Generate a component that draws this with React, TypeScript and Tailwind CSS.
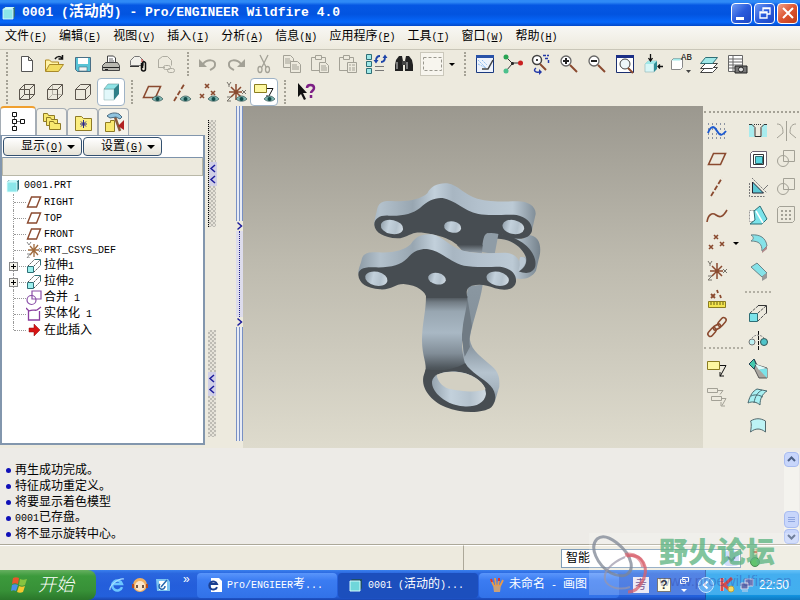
import { Fragment, ReactNode } from "react";

const GRAY = "#a3a196";
const BROWN = "#8a4a2f";
const CYAN = "#9fe8e8";
const TEAL = "#2f6f76";

const icon = {
  newFile: (
    <path d="M6.500 4.500h7l4 4v11h-11zM13.500 4.500v4h4" fill="#fff" stroke="#555" />
  ),
  open: (
    <>
      <path d="M2.500 19v-11h4l2 2h7v3" fill="#fff3a8" stroke="#b08a20" />
      <path d="M2.500 19.500l4-7h14l-5 7z" fill="#f2dc62" stroke="#a98a2a" />
      <path d="M12 7c2-3 5-3 7-1M19.500 3v4h-4" fill="none" stroke="#111" strokeWidth="1.500" />
    </>
  ),
  save: (
    <>
      <path d="M4.500 5.500h15v14h-13l-2-2z" fill="#57c3d6" stroke="#4a6f86" />
      <path d="M7 6h10v6h-10z" fill="#fff" />
      <path d="M8 15h8v4h-8z" fill="#f2f2f2" stroke="#3e6d7c" strokeWidth=".6" />
    </>
  ),
  print: (
    <>
      <path d="M8.500 12v-8h6l2 2v6" fill="#fff" stroke="#444" />
      <path d="M10 7h4M10 9h5" stroke="#666" />
      <path d="M3.500 13.500l3-3h12l2 3v5h-17z" fill="#b9b8b0" stroke="#444" />
      <path d="M4 15.500h16M6 17.500h3" stroke="#222" />
    </>
  ),
  attach: (
    <>
      <path d="M3.500 13.500v-5l4-4h5l4 4v5z" fill="#f1f0ea" stroke="#777" />
      <path d="M3 14.500h9" stroke="#333" />
      <path d="M14.500 11v6a2 2 0 0 0 4 0v-6a2 2 0 0 0-3-1v6" fill="none" stroke="#111" strokeWidth="1.500" />
      <path d="M15 7v3" stroke="#c33" />
    </>
  ),
  link: (
    <g fill="none" stroke="#aeaca1">
      <path d="M3.500 15.500v-8l4-3h5l4 4v5M3 15.500h7" />
      <rect x="8.500" y="13.500" width="7" height="4" rx="2" />
      <rect x="12.500" y="16.500" width="7" height="4" rx="2" />
    </g>
  ),
  undo: (
    <>
      <path d="M3 7v8h8z" fill={GRAY} />
      <path d="M7 12c4-5 13-5 12 1c0 3-3 4-5 5" fill="none" stroke={GRAY} strokeWidth="2" />
    </>
  ),
  redo: (
    <>
      <path d="M21 7v8h-8z" fill={GRAY} />
      <path d="M17 12c-4-5-13-5-12 1c0 3 3 4 5 5" fill="none" stroke={GRAY} strokeWidth="2" />
    </>
  ),
  cut: (
    <g fill="none" stroke={GRAY} strokeWidth="1.300">
      <path d="M8 3l6 12M16 3l-6 12" />
      <ellipse cx="8" cy="17.500" rx="2" ry="3" />
      <ellipse cx="15.500" cy="17.500" rx="2" ry="3" />
    </g>
  ),
  copy: (
    <g fill="#edeade" stroke={GRAY}>
      <path d="M3.500 3.500h7l3 3v9h-10zM5 7h5M5 9h6M5 11h6" />
      <path d="M10.500 9.500h7l3 3v8h-10zM12 13h5M12 15h7M12 17h7" />
    </g>
  ),
  paste: (
    <g fill="#edeade" stroke={GRAY}>
      <path d="M3.500 5.500h14v13h-14z" />
      <path d="M7.500 3.500h6v4h-6z" />
      <path d="M11.500 10.500h6l3 3v7h-9zM13 14h5M13 16h6M13 18h6" />
    </g>
  ),
  pasteSpecial: (
    <g fill="#edeade" stroke={GRAY}>
      <path d="M3.500 5.500h14v13h-14z" />
      <path d="M7.500 3.500h6v4h-6z" />
      <path d="M11.500 10.500h9v10h-9zM13 13h2M16 13h3M13 16h2M16 16h3M13 18h2M16 18h3" />
    </g>
  ),
  regen: (
    <>
      <path d="M2.500 2.500h5v5h-5zM2.500 9.500h5v5h-5zM2.500 16.500h5v5h-5z" fill={CYAN} stroke={TEAL} />
      <path d="M12 9c0-3 1-5 4-5M21 5c0 3-1 5-4 5" fill="none" stroke="#1f45a8" strokeWidth="1.800" />
      <path d="M9.500 8h5l-2.500 3.500zM18.500 6h5l-2.500-3.500z" fill="#1f45a8" />
      <path d="M11 14.500h9M11 18.500h9" stroke="#777" />
    </>
  ),
  find: (
    <>
      <path d="M4 8l3-4h3l1 5v10h-8v-6zM20 8l-3-4h-3l-1 5v10h8v-6z" fill="#222" />
      <path d="M10 9h4v4h-4z" fill="#444" />
      <path d="M5 10v7M15 10v7" stroke="#999" strokeWidth="1.500" />
    </>
  ),
  select: (
    <>
      <rect x="0.500" y="0.500" width="23" height="23" fill="#f7f5ee" stroke="#cbc8bb" />
      <rect x="3.500" y="5.500" width="18" height="13" fill="none" stroke="#9a988f" strokeDasharray="3 2" />
    </>
  ),
  repaint: (
    <>
      <path d="M3.500 3.500h17v17h-17z" fill="#eef3fc" stroke="#1b3a80" />
      <path d="M3 3h18v3h-18z" fill="#2952a8" />
      <path d="M5 8l8 8M9 8l5 5M5 12l8 4" stroke="#8dbcf0" strokeDasharray="2 1" />
      <path d="M9 17h6l5-9" fill="none" stroke="#444" strokeWidth="1.500" />
    </>
  ),
  datum: (
    <>
      <path d="M5 5l6 6h9M11 12l-6 7" fill="none" stroke="#333" />
      <circle cx="5" cy="5" r="2.500" fill="#29a352" />
      <circle cx="5" cy="19" r="2.500" fill="#4cc08c" />
      <circle cx="19.500" cy="11" r="2.500" fill="#c92020" />
      <circle cx="11.500" cy="11.500" r="1.500" fill="#222" />
    </>
  ),
  orient: (
    <>
      <circle cx="8" cy="8" r="4.500" fill="#fff" stroke="#444" strokeWidth="1.500" />
      <circle cx="8" cy="8" r="1" />
      <path d="M11 12l6 6" stroke={BROWN} strokeWidth="2" />
      <path d="M14 3.500h6M16 6.500h4M19.500 8v4" fill="none" stroke="#2339a8" strokeWidth="1.500" strokeDasharray="3 1" />
      <path d="M7 16c-3 2-1 5 3 4" fill="none" stroke="#2339a8" strokeWidth="1.500" />
      <path d="M10 17v6l3-3z" fill="#2339a8" />
    </>
  ),
  zoomIn: (
    <>
      <circle cx="9" cy="9" r="5" fill="#fff" stroke="#666" strokeWidth="1.300" />
      <path d="M6 9h6M9 6v6" stroke="#222" strokeWidth="2" />
      <path d="M13 13l7 7" stroke={BROWN} strokeWidth="2" />
    </>
  ),
  zoomOut: (
    <>
      <circle cx="9" cy="9" r="5" fill="#fff" stroke="#666" strokeWidth="1.300" />
      <path d="M6 9h6" stroke="#222" strokeWidth="2" />
      <path d="M13 13l7 7" stroke={BROWN} strokeWidth="2" />
    </>
  ),
  refit: (
    <>
      <path d="M3.500 3.500h17v17h-17z" fill="#fff" stroke="#1b2f70" />
      <path d="M3 3h18v3h-18z" fill="#1c2f86" />
      <circle cx="12" cy="12" r="5" fill="#eef6fa" stroke="#444" />
      <path d="M15 16l5 5" stroke={BROWN} strokeWidth="2" />
    </>
  ),
  reorient: (
    <>
      <path d="M4 12l3-3h9l-3 3v8h-9z" fill="#d7f6f7" stroke="#9bb" strokeWidth=".7" />
      <path d="M4 12l3-3h9l-3 3z" fill={CYAN} />
      <path d="M13 12l3-3v8l-3 3z" fill="#2f8e97" />
      <path d="M9.500 2v7M7.500 6l2 3l2-3M22 14.500h-5M19 12.500l-2 2l2 2" fill="none" stroke="#111" strokeWidth="1.300" />
    </>
  ),
  views: (
    <>
      <path d="M2.500 8.500l2-2h9v9l-2 2h-9z" fill="#fff" stroke="#888" />
      <path d="M3 8.500l2-2h8l-2 2z" fill={CYAN} />
      <text x="12" y="8" fontSize="9" fontFamily="Liberation Mono, monospace">AB</text>
      <path d="M17 18h5l-2.500 3z" fill="#444" />
    </>
  ),
  layers: (
    <g stroke="#444">
      <path d="M3.500 20.500l5-5h12l-5 5z" fill="#fff" />
      <path d="M3.500 16.500l5-5h12l-5 5z" fill="#fff" />
      <path d="M3.500 11.500l5-6h12l-5 6z" fill={CYAN} stroke={TEAL} />
    </g>
  ),
  viewMgr: (
    <>
      <path d="M3.500 3.500h14v16h-14zM8 4v15M4 7h13M4 10h13M4 13h13M4 16h13" fill="#fff" stroke="#666" />
      <path d="M10 14h12v7h-12z" fill="#777" stroke="#222" />
      <circle cx="16" cy="17.500" r="2.500" fill="#ddd" stroke="#222" />
    </>
  ),
  wire: (
    <path d="M4.500 9.500h10v10h-10zM9.500 4.500h10v10h-10zM4.500 9.500l5-5M14.500 9.500l5-5M14.500 19.500l5-5M4.500 19.500l5-5" fill="none" stroke="#5c564e" />
  ),
  hidden: (
    <>
      <path d="M9.500 4.500v10h10M4.500 19.500l5-5" fill="none" stroke="#b5b1a6" />
      <path d="M4.500 9.500h10v10h-10zM4.500 9.500l5-5h10v10l-5 5M14.500 9.500l5-5" fill="none" stroke="#5c564e" />
    </>
  ),
  noHidden: (
    <path d="M4.500 9.500h10v10h-10zM4.500 9.500l5-5h10v10l-5 5M14.500 9.500l5-5" fill="none" stroke="#5c564e" />
  ),
  shaded: (
    <>
      <path d="M5 9h10v11h-10z" fill="#e2f8fa" stroke="#9bb" strokeWidth=".6" />
      <path d="M5 9l4-5h11l-5 5z" fill="#8fe3e6" stroke="#699" strokeWidth=".6" />
      <path d="M15 9l5-5v10l-5 6z" fill="#2f8089" />
    </>
  ),
  plane: <path d="M3.500 17.500l5-11h12l-5 11z" fill="none" stroke={BROWN} strokeWidth="1.600" />,
  axis: <path d="M6 21l11-18" stroke={BROWN} strokeWidth="1.800" strokeDasharray="5 2" />,
  points: (
    <path d="M9 4l4 4M13 4l-4 4M15 11l4 4M19 11l-4 4M4 14l4 4M8 14l-4 4" stroke={BROWN} strokeWidth="1.600" />
  ),
  csys: (
    <>
      <path d="M12 4v16M5 12h13M7 7l10 10M17 7l-10 10" stroke={BROWN} strokeWidth="1.500" />
      <path d="M3 2l2 3l2-3M5 5v2M18 10l4 4M22 10l-4 4M3 17h4l-4 4h4" fill="none" stroke="#77736a" />
    </>
  ),
  note: (
    <>
      <path d="M2.500 4.500h12v8h-12z" fill="#fdf7a0" stroke="#8a7c20" />
      <path d="M15 8.500h6l-6 11M15 15v4h4" fill="none" stroke="#111" />
    </>
  ),
  notes: (
    <g fill="none" stroke={GRAY}>
      <path d="M2.500 3.500h10v4h-10zM6.500 11.500h10v4h-10zM13 5.500h5l-3 4M17 13.500h4l-4 7M16 17v4h4" />
    </g>
  ),
  help: (
    <>
      <path d="M5 3v14l3-3l3 6l2-1l-3-6h4z" fill="#111" />
      <path d="M14 8c0-4 7-4 7 0c0 3-3 3-3 5M18 15v3" fill="none" stroke="#7d1f86" strokeWidth="2.500" />
    </>
  ),
  sketch: (
    <>
      <path d="M3 5h18M3 10h18M3 15h18M3 19h18" stroke="#2a3c66" strokeDasharray="1 3" />
      <path d="M3 14c3-8 6-7 9-2s5 5 9 0" fill="none" stroke="#1d5ad0" strokeWidth="2" />
    </>
  ),
  curve: <path d="M2 19c1-7 5-10 9-7c4 3 7 2 11-5" fill="none" stroke={BROWN} strokeWidth="1.600" />,
  ruler: (
    <>
      <path d="M3.500 14.500h17v6h-17z" fill="#f3e44f" stroke="#8a7c20" />
      <path d="M6 15v3M9 15v3M12 15v3M15 15v3M18 15v3" stroke="#665c12" />
      <path d="M6 7l4 4M10 7l-4 4M12 3l1 3M15 8l1 3" stroke={BROWN} strokeWidth="1.800" />
    </>
  ),
  chain: (
    <g fill="none" stroke={BROWN} strokeWidth="1.500">
      <rect x="-5" y="-2.500" width="10" height="5" rx="2.500" transform="translate(7 17) rotate(-50)" />
      <rect x="-4" y="-2" width="8" height="4" rx="2" transform="translate(12 12) rotate(-30)" />
      <rect x="-5" y="-2.500" width="10" height="5" rx="2.500" transform="translate(17 7) rotate(-50)" />
    </g>
  ),
  hole: (
    <>
      <path d="M3 5h18v13h-18z" fill="#a8ecee" />
      <path d="M7 5h10l-1 3v9h-8v-9z" fill="#edeade" />
      <path d="M3 5.500h3l3 3v9h6v-9l3-3h3" fill="none" stroke="#333" />
      <path d="M8 5.500h8" stroke="#333" strokeDasharray="1 1" />
    </>
  ),
  shell: (
    <>
      <path d="M4.500 6.500l2-2h14v14l-2 2h-14z" fill="#fff" stroke="#6a6070" />
      <path d="M7.500 7.500h10v10h-10z" fill="#fff" stroke="#333" />
      <path d="M9.500 9.500h7v7h-7z" fill="#58d6e0" stroke={TEAL} />
    </>
  ),
  rib: (
    <>
      <path d="M3.500 8v13.500h15M6 3l15 15" fill="none" stroke="#777" strokeDasharray="2 1" />
      <path d="M6.500 7v11h11z" fill="#5cc8d4" stroke="#223" />
      <path d="M17 15l5-5" stroke="#777" />
    </>
  ),
  draft: (
    <>
      <path d="M3.500 7.500h7v11h-7z" fill="#fff" stroke="#999" strokeDasharray="2 1" />
      <path d="M8 8l6-5l7 13l-5 5h-12l5-4z" fill="#7be3ea" stroke={TEAL} />
      <path d="M10 8l7 12" stroke="#fff" strokeWidth="1.500" />
    </>
  ),
  round: (
    <>
      <path d="M5 4c9-1 15 3 16 11l-5 5c0-7-3-10-11-10c3-2 3-4 0-6z" fill="#85e2e8" stroke="#6c8488" />
      <path d="M21 15v3l-5 4v-2z" fill="#b08a8a" />
    </>
  ),
  chamfer: (
    <>
      <path d="M5 8l6-4l10 10l-5 4z" fill="#85e2e8" stroke="#6c8488" />
      <path d="M21 14v5l-5 3v-4z" fill="#999" />
    </>
  ),
  extrude: (
    <>
      <path d="M3.500 12.500h8v8h-8z" fill="#7be3ea" stroke={TEAL} />
      <path d="M4 12l8-7M12 20l8-8M12 12l8-7" stroke="#555" strokeDasharray="3 1" />
      <path d="M12 4.500h8.500v8" fill="none" stroke="#333" />
    </>
  ),
  revolve: (
    <>
      <path d="M12.500 2v20" stroke="#111" strokeDasharray="4 1" />
      <circle cx="6" cy="13" r="3" fill="#bdf1f3" stroke="#777" />
      <circle cx="18" cy="13" r="3.500" fill="#4fc4c9" stroke="#355" />
      <path d="M6 9c3-4 9-4 13 1" fill="none" stroke="#888" strokeDasharray="2 1" />
    </>
  ),
  sweep: (
    <>
      <path d="M3 7l5-5l3 6l10 3v10h-8l-5-10z" fill="#a9a6a0" stroke="#555" />
      <path d="M3 7l5-5l2 5l-2 5z" fill="#43c9ad" stroke="#245" />
      <path d="M9 7l11 4l-7 2z" fill="#d9fbfb" />
      <path d="M13 12.500l8-1v9.500z" fill="#7be3ea" />
    </>
  ),
  blend: (
    <>
      <path d="M2 18c2-8 5-12 9-14l10 2c-5 3-7 8-7 14c-3-3-8-4-12-2z" fill="#a8f0f2" stroke="#4a6a70" />
      <path d="M5 11c4-2 8-1 12 1M8 18c1-7 4-11 8-13" fill="none" stroke="#4a6a70" />
    </>
  ),
  style: (
    <path d="M4.500 19c1-6 1-9 0-11c5-3 10-3 15 0v11c-5-4-10-4-15 0z" fill="#bdf3f5" stroke="#53686c" />
  ),
  mirror: (
    <g fill="none" stroke={GRAY}>
      <path d="M12.500 2v20M3 5c5 0 6 4 6 9l-6 5M22 5c-5 0-6 4-6 9l6 5" />
    </g>
  ),
  merge: (
    <g fill="none" stroke={GRAY}>
      <circle cx="9" cy="14" r="5.500" />
      <path d="M9.500 3.500h11v11h-11z" />
    </g>
  ),
  pattern: (
    <>
      <path d="M3.500 5.500l2-2h15v14l-2 2h-15z" fill="none" stroke={GRAY} />
      <path d="M7 8h11M7 12h11M7 16h11" stroke={GRAY} strokeWidth="2" strokeDasharray="2 2" />
    </>
  ),
};
type IconName = keyof typeof icon;

const MENUS = [
  ["文件", "F"],
  ["编辑", "E"],
  ["视图", "V"],
  ["插入", "I"],
  ["分析", "A"],
  ["信息", "N"],
  ["应用程序", "P"],
  ["工具", "T"],
  ["窗口", "W"],
  ["帮助", "H"],
];

const FILE_TOOLS: IconName[] = ["newFile", "open", "save", "print", "attach", "link"];
const EDIT_TOOLS: IconName[] = ["undo", "redo", "cut", "copy", "paste", "pasteSpecial", "regen", "find", "select"];
const VIEW_TOOLS: IconName[] = ["repaint", "datum", "orient", "zoomIn", "zoomOut", "refit", "reorient", "views", "layers", "viewMgr"];
const DATUM_DISPLAY: IconName[] = ["plane", "axis", "points", "csys"];

const DATUM_COLUMN: IconName[] = ["sketch", "plane", "axis", "curve", "points", "csys", "ruler", "chain"];
const FEATURE_COLUMN: IconName[] = ["hole", "shell", "rib", "draft", "round", "chamfer"];
const SHAPE_COLUMN: IconName[] = ["extrude", "revolve", "sweep", "blend", "style"];
const EDIT_COLUMN: IconName[] = ["mirror", "merge", "merge", "pattern"];

const TREE = [
  { label: "RIGHT", kind: "plane" },
  { label: "TOP", kind: "plane" },
  { label: "FRONT", kind: "plane" },
  { label: "PRT_CSYS_DEF", kind: "csys" },
  { label: "拉伸1", kind: "extrude", expandable: true },
  { label: "拉伸2", kind: "extrude", expandable: true },
  { label: "合并 1", kind: "merge" },
  { label: "实体化 1", kind: "solidify" },
  { label: "在此插入", kind: "insert" },
];

const MESSAGES = ["再生成功完成。", "特征成功重定义。", "将要显示着色模型", "0001已存盘。", "将不显示旋转中心。"];

// Latin runs take half the width of a CJK character
const Txt = ({ children }: { children: string }) => (
  <>
    {children.split(/([\x20-\x7e]+)/).map((part, i) =>
      i % 2 ? (
        <span key={i} className="font-['Liberation_Mono',monospace] text-[10px] whitespace-pre">
          {part}
        </span>
      ) : (
        <Fragment key={i}>{part}</Fragment>
      ),
    )}
  </>
);

const Mnemonic = ({ letter }: { letter: string }) => (
  <span className="font-['Liberation_Mono',monospace] text-[10px]">
    (<u>{letter}</u>)
  </span>
);

const Tool = ({ name, eye, active }: { name: IconName; eye?: boolean; active?: boolean }) => (
  <button
    aria-label={name}
    className={`flex size-7 shrink-0 items-center justify-center rounded-sm ${active ? "border border-[#9fb3c6] bg-white" : ""}`}
  >
    <svg viewBox="0 0 24 24" className="size-6 shrink-0" aria-hidden="true">
      {icon[name]}
      {eye && (
        <g>
          <path d="M12 19c3-4 8-4 11 0c-3 3-8 3-11 0z" fill="#7fb5b0" stroke="#355" strokeWidth=".7" />
          <circle cx="17.500" cy="19" r="2" fill="#124a48" />
        </g>
      )}
    </svg>
  </button>
);

const Grip = () => (
  <span className="flex h-7 w-[13px] shrink-0 items-center justify-center">
    <span className="h-6 border-l-2 border-dotted border-[#a5a296]" />
  </span>
);

const HGrip = () => <div className="mx-px mt-[3px] mb-1 h-1 border-b-2 border-dotted border-[#a5a296]" />;

const Separator = () => (
  <div className="flex h-[14px] items-center px-px">
    <span className="w-full border-t-2 border-dotted border-[#b3b0a4]" />
  </div>
);

const Caret = () => <span className="border-x-4 border-t-4 border-x-transparent border-t-black" />;

const SmallCaret = () => <span className="border-x-3 border-t-3 border-x-transparent border-t-black" />;

const PartCube = () => (
  <svg viewBox="0 0 14 14" className="size-[14px]" aria-hidden="true">
    <path d="M1 3l2-2h10v9l-2 3h-10z" fill="#2c6d78" />
    <path d="M1 3h10v10h-10z" fill="#8be6ea" stroke="#e3ffff" strokeWidth=".8" />
    <path d="M1.500 3l2-2h9l-2 2z" fill="#c8f8fa" />
  </svg>
);

const TreeGlyph = ({ kind }: { kind: string }) => (
  <svg viewBox="0 0 16 16" className="size-4 shrink-0" aria-hidden="true">
    {kind === "plane" && <path d="M1.500 13l4-10h9l-4 10z" fill="#fff" stroke={BROWN} strokeWidth="1.400" />}
    {kind === "csys" && (
      <>
        <path d="M8 2v13M2 8h11M4 4l8 9M12 3l-8 10" stroke="#a06a3c" strokeWidth="1.300" />
        <path d="M1 0l2 3l2-3M13 6l3 4M16 6l-3 4M1 12h3l-3 4h3" fill="none" stroke="#888" />
      </>
    )}
    {kind === "extrude" && (
      <>
        <path d="M1.500 8.500h6v6h-6z" fill="#9df0ee" stroke={TEAL} />
        <path d="M2 8l7-7M8 14l6-6M8 8l6-6" stroke="#555" strokeDasharray="2 1" />
        <path d="M9 1.500h5.500v6" fill="none" stroke={TEAL} />
      </>
    )}
    {kind === "merge" && (
      <g fill="none" stroke="#8a4fa8" strokeWidth="1.200">
        <circle cx="5.500" cy="10" r="4.500" />
        <path d="M6 1h9v8h-9z" />
      </g>
    )}
    {kind === "solidify" && (
      <path d="M0 2l3 3c4-2 6 0 8-1l4-3M2.500 5v9h11v-9" fill="none" stroke="#8a3fa0" strokeWidth="1.300" />
    )}
    {kind === "insert" && <path d="M3 6h5v-4l6 6l-6 6v-4h-5z" fill="#d81414" stroke="#8d0a0a" strokeWidth=".5" />}
  </svg>
);

const TitleBar = () => (
  <header className="flex h-[26px] shrink-0 items-center bg-[linear-gradient(180deg,#2f8af6_0%,#2f8af6_8%,#0557e3_20%,#0254e0_55%,#0668fb_85%,#0348c8_100%)] px-[2px]">
    <PartCube />
    <h1 className="ml-[6px] font-['Liberation_Mono','Noto_Sans_CJK_SC',monospace] text-[13px] font-bold whitespace-pre text-white">
      0001 (<span className="text-[15px]">活动的</span>) - Pro/ENGINEER Wildfire 4.0
    </h1>
    <div className="ml-auto flex gap-[2px]">
      <button aria-label="最小化" className="flex size-[21px] rounded-sm border border-white bg-[linear-gradient(135deg,#6f9bf4,#2a5bdc_50%,#1c46c4)]">
        <span className="mt-[13px] ml-1 h-[3px] w-2 bg-white" />
      </button>
      <button aria-label="还原" className="flex size-[21px] items-center justify-center rounded-sm border border-white bg-[linear-gradient(135deg,#6f9bf4,#2a5bdc_50%,#1c46c4)]">
        <svg viewBox="0 0 12 12" className="size-3" fill="none" stroke="#fff" strokeWidth="1.300">
          <path d="M4 4v-3h7v6h-3M4 1.500h7M1 5h7v6h-7zM1 5.800h7" />
        </svg>
      </button>
      <button aria-label="关闭" className="flex size-[21px] items-center justify-center rounded-sm border border-white bg-[linear-gradient(135deg,#f0a088,#dd5430_50%,#c03c18)]">
        <svg viewBox="0 0 12 12" className="size-3" stroke="#fff" strokeWidth="2">
          <path d="M1 1l10 10M11 1l-10 10" />
        </svg>
      </button>
    </div>
  </header>
);

const MenuBar = () => (
  <nav className="flex h-6 shrink-0 items-center gap-3 border-b border-[#c9c6b8] bg-[linear-gradient(180deg,#f8f7f4,#edeadd)] pb-px pl-[5px]">
    {MENUS.map(([label, letter]) => (
      <button key={label} className="whitespace-nowrap">
        {label}
        <Mnemonic letter={letter} />
      </button>
    ))}
  </nav>
);

const Toolbars = () => (
  <div className="shrink-0">
    <div className="flex h-7 items-center">
      <Grip />
      {FILE_TOOLS.map((name) => (
        <Tool key={name} name={name} />
      ))}
      <Grip />
      {EDIT_TOOLS.map((name) => (
        <Tool key={name} name={name} />
      ))}
      <span className="flex w-3 justify-center">
        <SmallCaret />
      </span>
      <Grip />
      {VIEW_TOOLS.map((name) => (
        <Tool key={name} name={name} />
      ))}
    </div>
    <div className="flex h-7 items-center">
      <Grip />
      <Tool name="wire" />
      <Tool name="hidden" />
      <Tool name="noHidden" />
      <Tool name="shaded" active />
      <Grip />
      {DATUM_DISPLAY.map((name) => (
        <Tool key={name} name={name} eye />
      ))}
      <Tool name="note" eye active />
      <Grip />
      <Tool name="help" />
    </div>
  </div>
);

const Folder = ({ x, y }: { x: number; y: number }) => (
  <path transform={`translate(${x} ${y})`} d="M.5 9.500v-8h4l1 2h6v6z" fill="#f8e870" stroke="#8f7b25" />
);

const NavTab = ({ label, children }: { label: string; children: ReactNode }) => (
  <button
    aria-label={label}
    className="flex h-[27px] w-[31px] items-center justify-center rounded-t-sm border border-b-0 border-[#a5adb5] bg-[#f4f2ea]"
  >
    <svg viewBox="0 0 22 22" className="size-[22px]" aria-hidden="true">
      {children}
    </svg>
  </button>
);

const DropButton = ({ label, letter }: { label: string; letter: string }) => (
  <button className="flex h-[19px] w-[79px] items-center justify-end gap-1 rounded-sm border border-[#33506f] bg-[linear-gradient(180deg,#fff,#e6e3d8)] pr-[6px]">
    <span>
      {label}
      <Mnemonic letter={letter} />
    </span>
    <Caret />
  </button>
);

const ModelTree = () => (
  <section className="flex w-[205px] flex-col">
    <div className="flex h-[29px] shrink-0 items-end">
      <button
        aria-label="模型树"
        className="flex h-[29px] w-9 items-center justify-center rounded-t-sm border-x border-t-2 border-x-[#a5adb5] border-t-[#f0a030] bg-white"
      >
        <svg viewBox="0 0 18 22" className="h-[22px] w-[18px]" fill="#fff" stroke="#111">
          <path d="M5.500 5v12M5 10.500h8" stroke="#777" />
          <path d="M3.500 1.500h4v4h-4zM3.500 8.500h4v4h-4zM3.500 15.500h4v4h-4zM11.500 8.500h4v4h-4z" />
        </svg>
      </button>
      <NavTab label="文件夹浏览器">
        <Folder x={2} y={1} />
        <Folder x={5} y={5} />
        <Folder x={8} y={9} />
      </NavTab>
      <NavTab label="收藏夹">
        <path d="M3.500 19.500v-14h6l2 2h8v12z" fill="#fbee80" stroke="#8f7b25" />
        <path d="M11.500 9v8M8 13h7M9 10.500l5 5M14 10.500l-5 5" stroke="#26268c" />
      </NavTab>
      <NavTab label="连接">
        <path d="M2.500 20.500v-9h5v-2h4v11z" fill="#f8e870" stroke="#8f7b25" />
        <path d="M12 6l5 14" stroke="#8a5a3a" strokeWidth="2.500" />
        <path d="M4 5c3-3 8-4 12-2l3 3l-2 2l-4-2l-6 1z" fill="#8fc3de" stroke="#4a6a80" />
        <path d="M21 9l-6 6l6 4z" fill="#b22222" />
      </NavTab>
    </div>
    <div className="mb-[3px] flex flex-1 flex-col border-2 border-t border-[#8296ad] bg-white">
      <div className="flex h-[21px] shrink-0 items-center gap-px pl-px">
        <DropButton label="显示" letter="O" />
        <DropButton label="设置" letter="G" />
      </div>
      <div className="h-[19px] shrink-0 border border-[#b9b8a8] border-t-[#7d93ab] bg-[#edeade]" />
      <div className="flex h-[18px] items-center gap-1 pt-px pl-1">
        <PartCube />
        <Txt>0001.PRT</Txt>
      </div>
      <ul>
        {TREE.map((node, i) => (
          <li key={node.label} className="relative flex h-4 items-center pl-[11px]">
            <span className={`border-l border-dotted border-[#999] ${i === TREE.length - 1 ? "h-2 self-start" : "h-4"}`} />
            <span className="w-3 border-t border-dotted border-[#999]" />
            {node.expandable && (
              <button
                aria-label="展开"
                className="absolute left-[7px] flex size-[9px] items-center justify-center border border-[#888] bg-[#f4f2ea]"
              >
                <svg viewBox="0 0 7 7" className="size-[7px]" stroke="#000">
                  <path d="M1 3.500h5M3.500 1v5" />
                </svg>
              </button>
            )}
            <TreeGlyph kind={node.kind} />
            <span className="ml-[2px] whitespace-nowrap">
              <Txt>{node.label}</Txt>
            </span>
          </li>
        ))}
      </ul>
    </div>
  </section>
);

const SashHandle = ({ edge }: { edge?: boolean }) => (
  <div
    className={`flex h-[107px] w-2 flex-col items-center justify-center bg-[conic-gradient(#bebcb4_25%,#e6e3d9_0_50%,#bebcb4_0_75%,#e6e3d9_0)] bg-[size:4px_4px] ${edge ? "border-l border-dotted border-black" : ""}`}
  >
    <svg viewBox="0 0 8 24" className="h-6 w-2" fill="none" stroke="#1c1c9c" strokeWidth="1.500">
      <path d="M0 0h8v24h-8z" fill="#d0cfe6" stroke="none" />
      <path d="M6 3l-4 3.500l4 3.500M6 14l-4 3.500l4 3.500" />
    </svg>
  </div>
);

const SplitArrow = () => (
  <svg viewBox="0 0 7 10" className="h-[10px] w-[7px]" fill="none" stroke="#1c1c9c" strokeWidth="1.500">
    <path d="M1.500 1.500l4 3.500l-4 3.500" />
  </svg>
);

const SplitLines = () => (
  <div className="flex-1 border-x border-[#7890c4] bg-[#e9ecf4] px-px">
    <div className="mx-auto h-full w-px bg-[#7890c4]" />
  </div>
);

const Sashes = () => (
  <div className="flex flex-1 justify-between pl-[3px]">
    <div className="flex flex-col justify-between pt-[14px] pb-[11px]">
      <SashHandle edge />
      <SashHandle />
    </div>
    <div className="flex w-[7px] flex-col pb-[7px]">
      <SplitLines />
      <SplitArrow />
      <div className="flex h-[86px] justify-center bg-[#dddcec]">
        <span className="border-l border-dotted border-[#22228c]" />
      </div>
      <SplitArrow />
      <SplitLines />
    </div>
  </div>
);

const Viewport = () => (
  <main className="min-w-0 flex-1 bg-[linear-gradient(180deg,#9b988f_0%,#bdbaae_45%,#dedbcd_100%)]">
    <svg viewBox="243 106 460 342" className="h-full w-full" role="img" aria-label="0001.PRT">
      <defs>
        <linearGradient id="rim" gradientUnits="userSpaceOnUse" x1="55" y1="0" x2="600" y2="0">
          <stop offset="0" stopColor="#8d9ba6" />
          <stop offset=".12" stopColor="#b3c1cc" />
          <stop offset=".3" stopColor="#98a6b1" />
          <stop offset=".42" stopColor="#c2d0db" />
          <stop offset=".52" stopColor="#a8b6c2" />
          <stop offset=".68" stopColor="#b4c2ce" />
          <stop offset=".85" stopColor="#bccad5" />
          <stop offset="1" stopColor="#76838d" />
        </linearGradient>
        <linearGradient id="stem" x1="0" y1="0" x2="0" y2="1">
          <stop offset="0" stopColor="#454b50" />
          <stop offset=".08" stopColor="#727c84" />
          <stop offset=".2" stopColor="#98a6b1" />
          <stop offset=".48" stopColor="#a9b8c4" />
          <stop offset=".75" stopColor="#818d97" />
          <stop offset=".93" stopColor="#50585e" />
          <stop offset="1" stopColor="#454b50" />
        </linearGradient>
        <linearGradient id="side" x1="0" y1="0" x2="0" y2="1">
          <stop offset="0" stopColor="#8a97a1" />
          <stop offset=".35" stopColor="#84919b" />
          <stop offset=".55" stopColor="#8f9ca7" />
          <stop offset=".75" stopColor="#b6c4cf" />
          <stop offset=".9" stopColor="#a3b1bc" />
          <stop offset="1" stopColor="#737f89" />
        </linearGradient>
        <linearGradient id="shade" x1="0" y1="0" x2="0" y2="1">
          <stop offset="0" stopColor="#474d52" />
          <stop offset="1" stopColor="#98a4ae" />
        </linearGradient>
        <linearGradient id="bore" x1="0" y1="0" x2="1" y2="0">
          <stop offset="0" stopColor="#96a4af" />
          <stop offset=".35" stopColor="#c3d1dc" />
          <stop offset=".7" stopColor="#b4c2cd" />
          <stop offset="1" stopColor="#d0dae2" />
        </linearGradient>
      </defs>
      <g transform="translate(340 170) scale(.33333)">
        {/* rear ring */}
        <path d="M470 190C510 192 530 208 548 207C560 190 580 194 592 208C604 224 602 250 596 268L588 302C576 324 550 330 528 325L540 262L558 262C545 225 500 202 470 206Z" fill="url(#rim)" />
        <path d="M440 190C480 186 530 200 560 228C584 252 590 275 585 292C576 312 556 312 536 304C552 296 562 280 558 262C548 232 510 205 472 206Z" fill="#474d52" />
        <path d="M540 262C560 256 562 276 550 290C545 298 538 302 534 304Z" fill="#bac8d3" />
        <path d="M432 190L476 188L464 252L420 245Z" fill="#8f9ca6" />
        {/* upper plate */}
        <path d="M103 165C102 150 108 135 112 115C117 96 132 92 155 93C200 96 240 90 262 70C272 48 295 38 322 40C356 46 374 76 412 86C450 96 490 95 530 94C562 93 588 108 587 132L575 185L520 180L300 130L120 160Z" fill="url(#rim)" />
        <path d="M103 165C102 146 120 135 146 137C184 139 218 132 240 114C262 92 285 82 308 84C345 90 370 122 415 132C450 139 500 132 530 135C560 142 578 160 576 182C572 202 545 212 512 203C490 194 475 189 442 189C430 195 430 210 425 238L370 236C350 225 340 214 318 205C290 194 250 186 228 188C205 192 198 204 172 205C132 203 105 188 103 165Z" fill="#474d52" />
        <path d="M350 224L428 224L426 250L368 244Z" fill="url(#shade)" />
        <ellipse cx="156" cy="171" rx="34" ry="21" transform="rotate(12 156 171)" fill="url(#bore)" />
        <ellipse cx="338" cy="171" rx="26" ry="17" transform="rotate(12 338 171)" fill="url(#bore)" />
        <ellipse cx="520" cy="171" rx="33" ry="21" transform="rotate(12 520 171)" fill="url(#bore)" />
        {/* stem and lower ring */}
        <path d="M384 348L428 344C420 400 398 450 389 506C394 545 430 564 455 588C476 606 480 625 478 650L464 696L370 590L368 470Z" fill="url(#side)" />
        <path d="M382 382C370 430 366 470 366 510L374 560L390 530C386 512 390 490 396 468Z" fill="#707b84" />
        <path d="M258 378L382 378C382 420 364 460 366 510C366 540 370 565 376 582L378 608L256 608C262 580 246 560 246 510C246 460 258 425 258 378Z" fill="url(#stem)" />
        <path d="M257 598C300 606 340 600 376 580C390 606 430 625 452 648C470 668 470 695 454 712C428 732 360 730 318 712C272 692 244 656 250 620Z" fill="#474d52" />
        <path d="M276 635C278 612 315 603 352 605C402 611 436 638 438 672C434 702 402 712 370 709C318 704 275 668 276 635Z" fill="url(#bore)" />
        <path d="M290 614C318 602 350 603 382 612C412 623 432 642 437 658C410 670 355 662 326 656C304 648 292 632 290 614Z" fill="#d3d0c3" />
        {/* front plate */}
        <path d="M55 310C55 295 62 285 66 265C72 245 95 246 115 247C155 250 190 243 212 223C226 200 245 190 275 193C308 198 330 232 370 242C410 252 450 250 495 248C522 250 541 265 539 287L527 335L470 330L260 280L80 310Z" fill="url(#rim)" />
        <path d="M55 315C55 298 70 291 100 292C150 294 180 287 202 265C220 242 245 235 265 238C305 245 330 276 372 287C405 293 450 290 480 290C510 295 530 310 528 335C524 358 500 364 465 355C440 345 420 342 395 347C380 354 378 362 382 384L260 384C256 365 235 346 190 342C165 342 155 360 120 358C80 355 57 340 55 315Z" fill="#474d52" />
        <ellipse cx="109" cy="326" rx="34" ry="21" transform="rotate(12 109 326)" fill="url(#bore)" />
        <ellipse cx="291" cy="326" rx="27" ry="17" transform="rotate(12 291 326)" fill="url(#bore)" />
        <ellipse cx="473" cy="326" rx="34" ry="21" transform="rotate(12 473 326)" fill="url(#bore)" />
      </g>
    </svg>
  </main>
);

const FeatureBar = () => (
  <aside className="flex w-[97px] shrink-0">
    <div className="w-[41px]">
      <HGrip />
      {DATUM_COLUMN.map((name) => (
        <div key={name} className="flex items-center gap-[2px]">
          <Tool name={name} />
          {name === "points" && <SmallCaret />}
        </div>
      ))}
      <Separator />
      <Tool name="note" />
      <Tool name="notes" />
    </div>
    <div className="w-7">
      <HGrip />
      {FEATURE_COLUMN.map((name) => (
        <Tool key={name} name={name} />
      ))}
      <Separator />
      {SHAPE_COLUMN.map((name) => (
        <Tool key={name} name={name} />
      ))}
    </div>
    <div className="w-7">
      <HGrip />
      {EDIT_COLUMN.map((name, i) => (
        <Tool key={i} name={name} />
      ))}
    </div>
  </aside>
);

const ScrollArrow = ({ up }: { up?: boolean }) => (
  <button
    aria-label={up ? "向上滚动" : "向下滚动"}
    className="flex size-[15px] items-center justify-center rounded-sm border border-[#a9bcf0] bg-[#c8d6fb]"
  >
    <svg viewBox="0 0 9 9" className="size-[9px]" fill="none" stroke="#4d6185" strokeWidth="2">
      <path d={up ? "M1 6l3.500-3.500l3.500 3.500" : "M1 3l3.500 3.500l3.500-3.500"} />
    </svg>
  </button>
);

const MessageLog = () => (
  <section className="flex h-[96px] shrink-0 bg-[#edebe7]">
    <ul className="flex-1 pt-[14px] pl-[6px]">
      {MESSAGES.map((message) => (
        <li key={message} className="flex h-4 items-center gap-1">
          <span className="size-[5px] rounded-full bg-[#1010b8]" />
          <span>
            <Txt>{message}</Txt>
          </span>
        </li>
      ))}
    </ul>
    <div className="mt-1 mr-px flex w-[15px] flex-col bg-[#f4f3ee]">
      <ScrollArrow up />
      <div className="mt-auto mb-px flex h-[17px] flex-col items-center justify-center gap-px rounded-sm border border-[#a9bcf0] bg-[#c8d6fb]">
        <span className="h-px w-[7px] bg-[#8fa6e0]" />
        <span className="h-px w-[7px] bg-[#8fa6e0]" />
        <span className="h-px w-[7px] bg-[#8fa6e0]" />
      </div>
      <ScrollArrow />
    </div>
  </section>
);

const StatusBar = () => (
  <div className="flex h-[26px] shrink-0 items-center border-t border-[#aca899]">
    <div className="h-full flex-1 border-t border-white" />
    <div className="flex h-full w-[337px] items-center border-t border-l border-t-white border-l-[#aca899] pl-[97px]">
      <div className="relative">
        <select
          aria-label="选择过滤器"
          className="h-[19px] w-[180px] appearance-none border border-[#7f9db9] bg-white pl-1 text-[12px] leading-4"
        >
          <option>智能</option>
        </select>
        <span className="pointer-events-none absolute top-[2px] right-[2px] flex size-[15px] items-center justify-center rounded-sm bg-[#c8d6fb]">
          <svg viewBox="0 0 9 9" className="size-[9px]" fill="none" stroke="#4d6185" strokeWidth="2">
            <path d="M1 3l3.500 3.500l3.500-3.500" />
          </svg>
        </span>
      </div>
      <svg viewBox="0 0 12 20" className="ml-2 h-5 w-3" aria-hidden="true">
        <path d="M4 1h4v10h-4z" fill="#d8d4a0" stroke="#8a8a60" strokeWidth=".6" />
        <path d="M4 3h4v2h-4z" fill="#c07050" />
        <circle cx="6" cy="14" r="4.500" fill="#3bb44a" stroke="#1d6b2a" />
      </svg>
    </div>
  </div>
);

const Task = ({ label, active, children }: { label: string; active?: boolean; children: ReactNode }) => (
  <button
    className={`flex h-[25px] w-[140px] shrink-0 items-center gap-1 rounded-sm pl-[10px] whitespace-nowrap ${active ? "bg-[#1c4fbd]" : "bg-[linear-gradient(180deg,#5a96fb,#3b7cf2_30%,#3272e8)]"}`}
  >
    <svg viewBox="0 0 16 16" className="size-4" aria-hidden="true">
      {children}
    </svg>
    <span>
      <Txt>{label}</Txt>
    </span>
  </button>
);

const Taskbar = () => (
  <footer className="flex h-[30px] shrink-0 items-center bg-[linear-gradient(180deg,#3a80ee_0%,#2a66de_12%,#245edb_50%,#2360dc_88%,#1a46b0_100%)] text-white">
    <button className="flex h-[30px] w-24 shrink-0 items-center gap-2 rounded-r-lg bg-[linear-gradient(180deg,#66b060_0%,#3c9a3c_20%,#379037_70%,#2a762a_100%)] pl-[10px]">
      <svg viewBox="0 0 20 18" className="h-[18px] w-5" aria-hidden="true">
        <path d="M3 2c2-1 4-1 6 0l-1 6c-2-1-4-1-6 0z" fill="#e8562c" />
        <path d="M10 3c2 1 4 1 7 0l-2 6c-2 1-4 1-6 0z" fill="#86c440" />
        <path d="M2 9c2-1 4-1 6 0l-2 6c-2-1-3-1-5 0z" fill="#4a8fe8" />
        <path d="M9 10c2 1 4 1 6 0l-2 6c-2 1-4 1-6 0z" fill="#f6c830" />
      </svg>
      <span className="text-[18px] leading-6 font-light italic">开始</span>
    </button>
    <div className="flex w-[101px] shrink-0 items-center gap-[7px] pl-[13px]">
      <svg viewBox="0 0 16 16" className="size-4" aria-hidden="true">
        <path d="M13 10a5 5 0 1 1 0-3h-9" fill="none" stroke="#6cc6ff" strokeWidth="2.500" />
        <path d="M1 13c-1-4 8-12 14-11" fill="none" stroke="#a9dcff" strokeWidth="1.200" />
      </svg>
      <svg viewBox="0 0 16 16" className="size-4" aria-hidden="true">
        <circle cx="8" cy="8" r="7" fill="#f2b060" />
        <circle cx="8" cy="9" r="5" fill="#fbe6cc" />
        <path d="M5 8v3M11 8v3" stroke="#4a2a18" strokeWidth="1.500" />
        <path d="M1 7v4M15 7v4" stroke="#b24a28" strokeWidth="2" />
      </svg>
      <svg viewBox="0 0 16 16" className="size-4" aria-hidden="true">
        <path d="M1 2h12l2 3v9h-13z" fill="#7cc4f2" />
        <path d="M4 4h8v9h-8z" fill="#fff" />
        <path d="M6 10l6-7M5 7a3 3 0 1 0 5 2" fill="none" stroke="#2668b0" strokeWidth="1.500" />
      </svg>
      <span className="mb-3 ml-[5px] text-[12px] leading-4">»</span>
    </div>
    <div className="flex gap-px">
      <Task label="Pro/ENGIEER考...">
        <path d="M4 1h8l3 3v11h-11z" fill="#fff" />
        <path d="M10 10a4 4 0 1 1 0-3h-7" fill="none" stroke="#1b3f90" strokeWidth="2" />
      </Task>
      <Task label="0001 (活动的)..." active>
        <path d="M2 4l2-2h10v9l-2 3h-10z" fill="#1f4f66" />
        <path d="M2 4h10v10h-10z" fill="#6fd6da" stroke="#d4fbfb" />
      </Task>
      <Task label="未命名 - 画图">
        <path d="M4 8h8l-1 7h-6z" fill="#c9a079" />
        <path d="M5 9l-3-6M7 9l-1-8M9 9l1-7M11 9l3-6" stroke="#e89a4a" strokeWidth="1.800" />
        <path d="M3 5l-1-3M10 4v-3" stroke="#d33" strokeWidth="2" />
      </Task>
    </div>
    <div className="ml-auto flex items-center gap-2 pr-4">
      <span className="flex size-4 items-center justify-center bg-[#e9e4f2] text-[12px] leading-4 text-[#51307d]">考</span>
      <span className="flex size-[14px] items-center justify-center border border-[#555] bg-[#fffde0] text-[12px] leading-4 font-bold text-black">?</span>
      <svg viewBox="0 0 10 18" className="h-[18px] w-[10px]" fill="none" stroke="#fff" aria-hidden="true">
        <path d="M3.500 1.500h6v4h-6zM1.500 3.500h5v4h-5z" />
        <path d="M2 13h6l-3 3z" fill="#fff" stroke="none" />
      </svg>
    </div>
    <div className="flex h-[30px] w-[95px] shrink-0 items-center gap-[5px] border-l border-[#1550a8] bg-[linear-gradient(180deg,#3fb2f6_0%,#169aec_15%,#139bea_80%,#0f78c0_100%)]">
      <svg viewBox="0 0 16 16" className="-ml-2 size-4" aria-hidden="true">
        <circle cx="8" cy="8" r="7.500" fill="#3f9df0" stroke="#b9e0ff" />
        <path d="M9.500 4.500l-3.500 3.500l3.500 3.500" fill="none" stroke="#fff" strokeWidth="2" />
      </svg>
      <svg viewBox="0 0 16 16" className="size-4" aria-hidden="true">
        <path d="M1 1h4v13h-4z" fill="#fff" />
        <path d="M3 1v13M13 1l-8 7l7 6" fill="none" stroke="#cc1e1e" strokeWidth="3" />
        <circle cx="12" cy="12" r="3" fill="#f5d23c" stroke="#a78a10" />
      </svg>
      <svg viewBox="0 0 14 14" className="size-[14px]" aria-hidden="true">
        <path d="M5 1h8v7h-8z" fill="#4a58a8" stroke="#c9cbe0" />
        <path d="M1 5h7v6h-7z" fill="#3b4a98" stroke="#d9dbec" />
        <path d="M2 13h6" stroke="#c9cbe0" />
      </svg>
      <span className="text-[12px] leading-4">22:50</span>
    </div>
  </footer>
);

// Forum stamp that floats over the status bar and tray
const ForumStamp = () => (
  <div className="pointer-events-none absolute right-0 bottom-[5px] flex h-[62px] w-[211px] bg-white/20">
    <svg viewBox="0 0 62 62" className="h-[62px] w-[62px] shrink-0" fill="none" aria-hidden="true">
      <path d="M8 6c-8 8 0 26 14 34c12 6 22 2 20-10c-3-14-24-32-34-24z" stroke="#7d8594" strokeWidth="3" opacity=".75" />
      <path d="M36 24c-14 6-24 16-19 25c5 7 16 8 24 5" stroke="#9a95a8" strokeWidth="2" opacity=".7" />
      <path d="M38 23c16-3 23 12 15 26c-3 6-8 10-14 10" stroke="#d8606c" strokeWidth="3" opacity=".75" />
      <path d="M36 22c10-2 17 4 18 12" stroke="#d8606c" strokeWidth="4" opacity=".6" />
    </svg>
    <div className="flex flex-col pl-2">
      <span className="text-[29px] leading-10 font-black text-[#5fb583]/80">野火论坛</span>
      <span className="text-[15px] leading-4 text-[#2b3a9c]/35">www.proewildfire.cn</span>
    </div>
  </div>
);

export default function App() {
  return (
    <div className="relative flex min-h-screen flex-col overflow-hidden bg-[#edeade] font-['Liberation_Sans','Noto_Sans_CJK_SC',sans-serif] text-[12px] leading-4 text-black">
      <TitleBar />
      <MenuBar />
      <Toolbars />
      <div className="flex flex-1">
        <div className="flex w-[243px] shrink-0">
          <ModelTree />
          <Sashes />
        </div>
        <Viewport />
        <FeatureBar />
      </div>
      <MessageLog />
      <StatusBar />
      <Taskbar />
      <ForumStamp />
    </div>
  );
}
